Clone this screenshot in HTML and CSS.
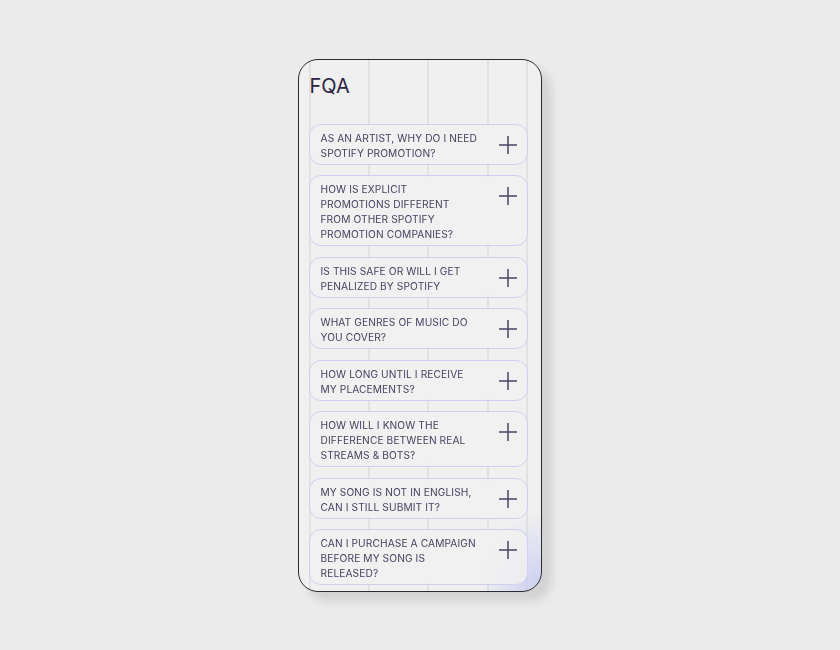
FILE: index.html
```html
<html>
	<head>
		<title>FQA</title>
		<meta name="viewport" content="width=device-width,initial-scale=1">
		<link rel="stylesheet" href="styles.css">
	</head>
	<body>
		<div class="stage">
			<div class="phone">
				<h1 class="title">FQA</h1>
				<div class="faq-list">
					<div class="faq-item">
						<p class="question">As an artist, why do I need Spotify promotion?</p>
						<svg class="plus" viewBox="0 0 18 18"><path d="M9 0V18M0 9H18"/></svg>
					</div>
					<div class="faq-item">
						<p class="question">How is Explicit promotions different from other Spotify promotion companies?</p>
						<svg class="plus" viewBox="0 0 18 18"><path d="M9 0V18M0 9H18"/></svg>
					</div>
					<div class="faq-item">
						<p class="question">Is this safe or will I get penalized by Spotify</p>
						<svg class="plus" viewBox="0 0 18 18"><path d="M9 0V18M0 9H18"/></svg>
					</div>
					<div class="faq-item">
						<p class="question">What genres of music do you cover?</p>
						<svg class="plus" viewBox="0 0 18 18"><path d="M9 0V18M0 9H18"/></svg>
					</div>
					<div class="faq-item">
						<p class="question">How long until I receive my placements?</p>
						<svg class="plus" viewBox="0 0 18 18"><path d="M9 0V18M0 9H18"/></svg>
					</div>
					<div class="faq-item">
						<p class="question">How will I know the difference between real streams &amp; bots?</p>
						<svg class="plus" viewBox="0 0 18 18"><path d="M9 0V18M0 9H18"/></svg>
					</div>
					<div class="faq-item">
						<p class="question">My song is not in English, can I still submit it?</p>
						<svg class="plus" viewBox="0 0 18 18"><path d="M9 0V18M0 9H18"/></svg>
					</div>
					<div class="faq-item">
						<p class="question">Can I purchase a campaign before my song is released?</p>
						<svg class="plus" viewBox="0 0 18 18"><path d="M9 0V18M0 9H18"/></svg>
					</div>
				</div>
			</div>
		</div>
	</body>
</html>
```

FILE: styles.css
```css
* {
	margin: 0;
	padding: 0;
	box-sizing: border-box;
}

body {
	background: #ebebeb;
	font-family: 'Inter', 'Liberation Sans', sans-serif;
}

.stage {
	width: 100vw;
	height: 100vh;
	display: flex;
	align-items: center;
	justify-content: center;
}

.phone {
	width: 244px;
	height: 533px;
	margin-left: -1px;
	border: 1px solid #2c2b30;
	border-radius: 20px;
	overflow: hidden;
	padding: 14px 13px 0 10px;
	background-color: #f0f0f0;
	background-image:
		radial-gradient(ellipse 60px 80px at 100% 100%, rgba(200,202,242,.9), rgba(200,202,242,0)),
		linear-gradient(90deg,
			transparent 10px, #e1e1e1 10px, #e1e1e1 12px, transparent 12px,
			transparent 69px, #e1e1e1 69px, #e1e1e1 71px, transparent 71px,
			transparent 128px, #e1e1e1 128px, #e1e1e1 130px, transparent 130px,
			transparent 188px, #e1e1e1 188px, #e1e1e1 190px, transparent 190px,
			transparent 227px, #e1e1e1 227px, #e1e1e1 229px, transparent 229px);
	box-shadow: 9px 9px 10px rgba(0,0,0,.11);
}

.title {
	font-size: 20px;
	line-height: 24px;
	font-weight: 400;
	color: #2d2644;
	padding-left: 1px;
	margin-bottom: 26px;
}

.faq-list {
	display: flex;
	flex-direction: column;
	gap: 10.5px;
}

.faq-item {
	display: flex;
	align-items: flex-start;
	justify-content: space-between;
	padding: 6px 10px 3px 11px;
	border: 1px solid #cdd0f2;
	border-radius: 12px;
	background: rgba(241,241,241,.8);
	backdrop-filter: blur(6px);
}

.question {
	width: 158px;
	font-size: 10.2px;
	line-height: 15px;
	letter-spacing: .1px;
	text-transform: uppercase;
	color: #474061;
}

.plus {
	width: 18px;
	height: 18px;
	margin-top: 5px;
	flex-shrink: 0;
	fill: none;
	stroke: #4c4462;
	stroke-width: 1.5;
}
```
